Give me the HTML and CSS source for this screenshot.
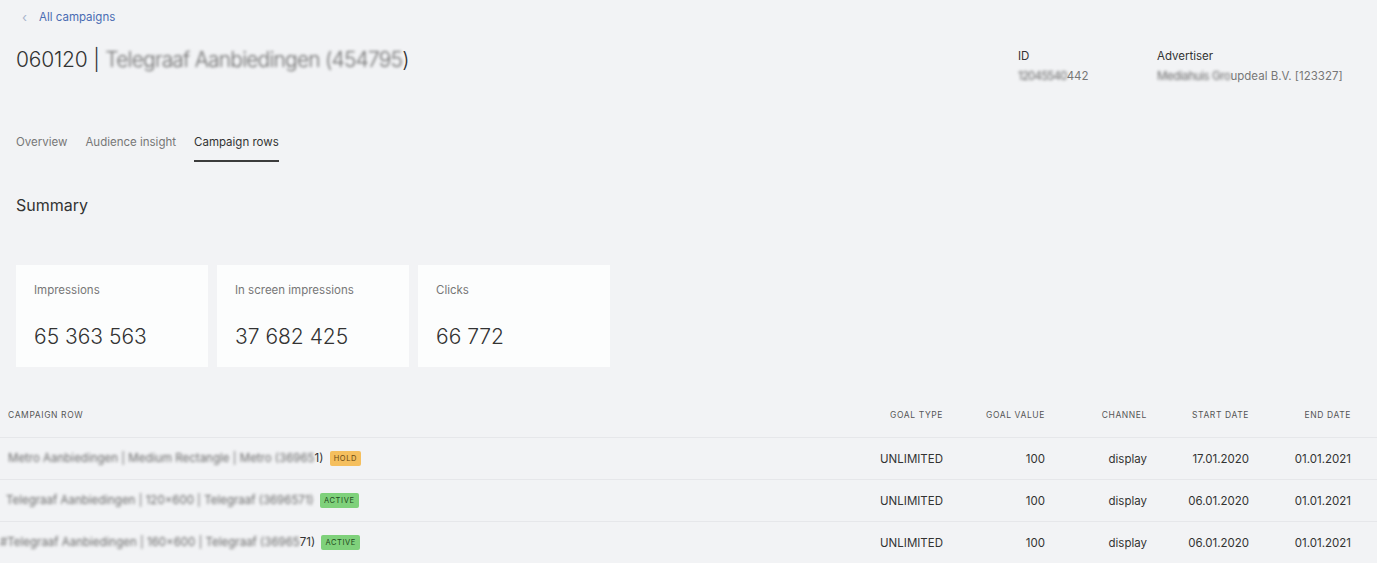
FILE: index.html
```html
<!DOCTYPE html>
<html lang="en">
<head>
  <meta charset="UTF-8">
  <meta name="viewport" content="width=device-width, initial-scale=1.0">
  <title>Campaign rows</title>
  <link rel="stylesheet" href="styles.css">
</head>
<body>

<div class="page">
  <!-- Header -->
  <a class="back" href="#"><span class="chev">&lsaquo;</span> All campaigns</a>

  <div class="head">
    <h1 class="title">060120 | <span class="redacted tight">Telegraaf Aanbiedingen (454795</span>)</h1>
    <div class="meta">
      <div class="meta-item meta-id">
        <div class="meta-label">ID</div>
        <div class="meta-value"><span class="redacted tight">12045540</span>442</div>
      </div>
      <div class="meta-item meta-adv">
        <div class="meta-label">Advertiser</div>
        <div class="meta-value"><span class="redacted semi">Mediahuis Gro</span>updeal B.V. [123327]</div>
      </div>
    </div>
  </div>

  <!-- Tabs -->
  <div class="tabs">
    <a class="tab" href="#">Overview</a>
    <a class="tab" href="#">Audience insight</a>
    <a class="tab current" href="#">Campaign rows</a>
  </div>

  <h2 class="section-title">Summary</h2>

  <div class="cards">
    <div class="card">
      <div class="card-label">Impressions</div>
      <div class="card-value">65 363 563</div>
    </div>
    <div class="card">
      <div class="card-label">In screen impressions</div>
      <div class="card-value">37 682 425</div>
    </div>
    <div class="card">
      <div class="card-label">Clicks</div>
      <div class="card-value">66 772</div>
    </div>
  </div>
</div>

<table class="rows">
  <thead>
    <tr>
      <th class="name-col">Campaign row</th>
      <th>Goal type</th>
      <th>Goal value</th>
      <th>Channel</th>
      <th>Start date</th>
      <th>End date</th>
    </tr>
  </thead>
  <tbody>
    <tr>
      <td class="name-col"><span class="redacted">Metro Aanbiedingen | Medium Rectangle | Metro (36965</span>1) <span class="badge badge-hold">HOLD</span></td>
      <td>UNLIMITED</td>
      <td>100</td>
      <td>display</td>
      <td>17.01.2020</td>
      <td>01.01.2021</td>
    </tr>
    <tr>
      <td class="name-col shift-sm"><span class="redacted">Telegraaf Aanbiedingen | 120x600 | Telegraaf (3696571)</span> <span class="badge badge-active">ACTIVE</span></td>
      <td>UNLIMITED</td>
      <td>100</td>
      <td>display</td>
      <td>06.01.2020</td>
      <td>01.01.2021</td>
    </tr>
    <tr>
      <td class="name-col shift"><span class="redacted">#Telegraaf Aanbiedingen | 160x600 | Telegraaf (36965</span>71) <span class="badge badge-active">ACTIVE</span></td>
      <td>UNLIMITED</td>
      <td>100</td>
      <td>display</td>
      <td>06.01.2020</td>
      <td>01.01.2021</td>
    </tr>
  </tbody>
</table>

</body>
</html>
```

FILE: styles.css
```css
body {
  margin: 0;
  font-family: Inter, "Noto Sans", Arial, sans-serif;
  background-color: #f2f3f5;
  color: #333;
}
.page {
  padding: 0 16px;
}
a {
  text-decoration: none;
}
.back {
  display: flex;
  align-items: center;
  gap: 12px;
  height: 34px;
  padding-left: 6px;
  font-size: 11.5px;
  color: #4a6cb3;
}
.chev {
  color: #a9b4cc;
  font-size: 13px;
}
.redacted {
  display: inline-block;
  filter: blur(1.4px);
  color: #6a6a6a;
}
.redacted.tight {
  letter-spacing: -0.8px;
}
.redacted.semi {
  letter-spacing: -0.4px;
}
.head {
  display: flex;
  justify-content: space-between;
  align-items: flex-start;
}
.title {
  margin: 13px 0 0 0;
  font-size: 21px;
  font-weight: 300;
  color: #333;
  letter-spacing: -0.2px;
}
.meta {
  display: flex;
  margin-top: 14px;
  margin-right: 2px;
}
.meta-id {
  width: 139px;
}
.meta-adv {
  width: 202px;
}
.meta-label {
  font-size: 11.5px;
  color: #333;
  line-height: 16px;
}
.meta-value {
  font-size: 11.5px;
  color: #777;
  line-height: 16px;
  margin-top: 4px;
}
.tabs {
  display: flex;
  gap: 18px;
  margin-top: 51px;
}
.tab {
  font-size: 11.5px;
  color: #777;
  padding-bottom: 11px;
  border-bottom: 2px solid transparent;
}
.tab.current {
  color: #333;
  border-bottom-color: #3c3c3c;
}
.section-title {
  margin: 33px 0 0 0;
  font-size: 16px;
  font-weight: 400;
  color: #333;
}
.cards {
  display: flex;
  gap: 9px;
  margin-top: 50px;
}
.card {
  width: 156px;
  height: 102px;
  padding: 0 18px;
  background-color: #fcfdfd;
  box-sizing: content-box;
}
.card-label {
  margin-top: 18px;
  font-size: 11.5px;
  color: #777;
}
.card-value {
  margin-top: 27px;
  font-size: 21px;
  font-weight: 300;
  color: #333;
}
.rows {
  width: 100%;
  margin-top: 26px;
  border-collapse: collapse;
}
.rows th {
  font-size: 8.5px;
  font-weight: 400;
  letter-spacing: 0.6px;
  text-transform: uppercase;
  color: #555;
  text-align: right;
  height: 44px;
  padding: 0;
  width: 102px;
}
.rows th:last-child,
.rows td:last-child {
  padding-right: 26px;
}
.rows td {
  font-size: 11.5px;
  color: #333;
  text-align: right;
  height: 41px;
  border-top: 1px solid #e6e7ea;
  padding: 0;
}
.rows tbody tr:last-child td {
  border-bottom: 1px solid #e6e7ea;
}
.rows .name-col {
  text-align: left;
  width: auto;
  padding-left: 8px;
}
.rows td.shift-sm {
  padding-left: 6px;
}
.rows td.shift {
  padding-left: 0;
}
.badge {
  display: inline-block;
  font-size: 7.5px;
  letter-spacing: 0.6px;
  padding: 3px 4px;
  border-radius: 2px;
  margin-left: 3px;
  vertical-align: 1px;
}
.badge-hold {
  background-color: #f5bf5e;
  color: #6a4a12;
}
.badge-active {
  background-color: #7fd17b;
  color: #1f4a1e;
}
```
